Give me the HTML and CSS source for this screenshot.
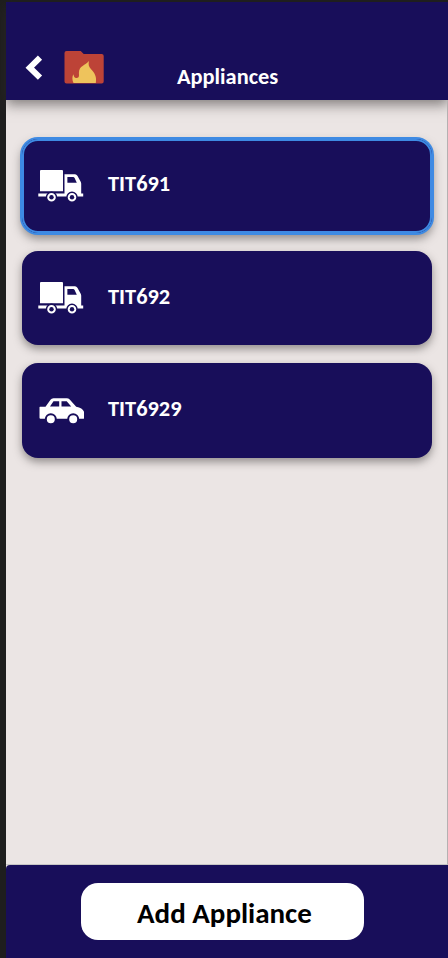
FILE: index.html
```html
<!DOCTYPE html>
<html lang="en">
<head>
<meta charset="utf-8">
<title>Appliances</title>
<link rel="stylesheet" href="styles.css">
</head>
<body>
<svg width="0" height="0" class="defs">
  <symbol id="truck" viewBox="0 0 46 34">
    <path fill="#fff" d="M3 1h21q1 0 1 1v20.300H2V2q0-1 1-1zM26.500 5.200H37q1.500 0 2.400 1.600l3.300 6q.5 1 .5 2v9.700h2v3.100H.3v-3.100h26.200z"/>
    <path fill="#180e5a" d="M29.400 8h5.800q.9 0 1.400 1l2.200 4.800h-9.400z"/>
    <g fill="#fff" stroke="#180e5a" stroke-width="1.400"><circle cx="13.500" cy="28.200" r="5"/><circle cx="34" cy="28.200" r="5"/></g>
    <g fill="#180e5a"><circle cx="13.500" cy="28.200" r="2.200"/><circle cx="34" cy="28.200" r="2.200"/></g>
  </symbol>
  <symbol id="car" viewBox="0 0 46 34">
    <path fill="#fff" d="M2 12.800h5.500l5-7q1-1.500 3-1.500h13.200q1.800 0 3 1.300l6.500 7.200q8.300 1.200 8.300 8v2.500q0 1.500-1.500 1.500H2.500q-1 0-1-1V13.300q0-.5.5-.5z"/>
    <path fill="#180e5a" d="M15.500 7.300h5.700v5.200h-9.200zM23.500 7.300h5.200l4.500 5.200h-9.700z"/>
    <g fill="#fff" stroke="#180e5a" stroke-width="2"><circle cx="12.800" cy="25.200" r="5"/><circle cx="35.200" cy="25.200" r="5"/></g>
  </symbol>
</svg>
<div class="app">
  <header class="header">
    <svg class="back" viewBox="0 0 20 28"><path d="M15 3.700 4.800 13.700l10.200 10" fill="none" stroke="#fff" stroke-width="6"/></svg>
    <svg class="folder" viewBox="0 0 40 34">
      <path fill="#bd4337" d="M2.500 1h14.200l3 3h18q2 0 2 2v25.500q0 2-2 2h-35.200q-2 0-2-2V3q0-2 2-2z"/>
      <path fill="#eec35c" d="M9.500 33C8 30 8 26.500 9.500 24.300c.2 2.700 1.300 4 3.200 3.700 2.800-.4 2.300-2.300 2.200-5C14.900 15.500 21.500 15.500 24.900 11c-.6 3.500-.3 5.500 2.200 8.300C31 23.500 32.800 27 31.800 33z"/>
    </svg>
    <h1 class="title">Appliances</h1>
  </header>
  <main class="list">
    <div class="card selected"><svg class="icon"><use href="#truck"/></svg><span class="name">TIT691</span></div>
    <div class="card"><svg class="icon"><use href="#truck"/></svg><span class="name">TIT692</span></div>
    <div class="card"><svg class="icon"><use href="#car"/></svg><span class="name">TIT6929</span></div>
  </main>
  <footer class="footer">
    <button class="add">Add Appliance</button>
  </footer>
</div>
</body>
</html>
```
FILE: styles.css
```css
* { box-sizing: border-box; }
body {
  margin: 0;
  height: 958px;
  padding: 2px 0 0 6px;
  overflow: hidden;
  background: #1e1e1e;
  font-family: Carlito, Lato, "Noto Sans", sans-serif;
  font-weight: 700;
}
.defs { display: none; }
.app {
  height: 956px;
  display: flex;
  flex-direction: column;
  background: #ebe5e4;
}
.header {
  height: 98px;
  flex: none;
  display: flex;
  align-items: flex-start;
  background: #180e5a;
  box-shadow: 0 5px 12px rgba(50, 45, 45, .55);
  color: #fff;
}
.back { width: 20px; height: 28px; margin: 52px 0 0 19px; }
.folder { width: 40px; height: 34px; margin: 48px 0 0 19px; }
.title {
  margin: 61px 0 0 73px;
  font-size: 22.400px;
  line-height: 27px;
}
.list {
  flex: 1;
  display: flex;
  flex-direction: column;
  gap: 18px;
  padding: 38.600px 15px 0 16px;
  border-right: 1px solid #b5b0b1;
  border-bottom: 1px solid #c6c5c5;
}
.card {
  height: 94.400px;
  flex: none;
  display: flex;
  align-items: center;
  padding-left: 16px;
  border-radius: 16px;
  background: #180e5a;
  color: #fff;
  box-shadow: 0 4px 9px rgba(60, 55, 55, .5);
}
.selected {
  box-shadow: 0 0 0 2px #3e8ae3, inset 0 0 0 2px #3e8ae3, 0 5px 10px 1px rgba(60, 55, 55, .5);
}
.icon { width: 46px; height: 34px; flex: none; }
.name {
  margin-left: 24px;
  padding-bottom: 3px;
  font-size: 22.400px;
  line-height: 28px;
}
.footer {
  height: 93px;
  flex: none;
  padding: 18px 0 0 75px;
  background: #180e5a;
  border-top-left-radius: 4px;
}
.add {
  display: flex;
  align-items: center;
  width: 283px;
  height: 57px;
  padding: 3px 0 0 56px;
  border: 0;
  border-radius: 17px;
  background: #fff;
  color: #000;
  font: 700 29px/36px Carlito, Lato, "Noto Sans", sans-serif;
  white-space: nowrap;
}
```
